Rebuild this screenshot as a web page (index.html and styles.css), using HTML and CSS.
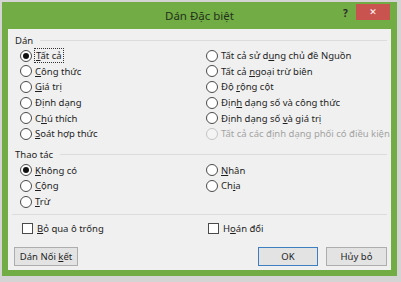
FILE: index.html
```html
<!DOCTYPE html>
<html>
<head>
<meta charset=utf-8>
<title>Dán Đặc biệt</title>
<link rel="stylesheet" href="styles.css">
</head>
<body>
<div class="dialog">
  <div class="titlebar">
    <span class="title">Dán Đặc biệt</span>
    <span class="help">?</span>
    <span class="close">&#x2715;</span>
  </div>
  <div class="panel">
    <div class="group-head"><span>Dán</span><i></i></div>
    <div class="options paste">
      <label class="opt"><span class="radio on"></span><span class="focus"><u>T</u>ất cả</span></label>
      <label class="opt"><span class="radio"></span><span>Tất cả sử d<u>u</u>ng chủ đề Nguồn</span></label>
      <label class="opt"><span class="radio"></span><span><u>C</u>ông thức</span></label>
      <label class="opt"><span class="radio"></span><span>Tất cả <u>n</u>goại trừ biên</span></label>
      <label class="opt"><span class="radio"></span><span><u>G</u>iá trị</span></label>
      <label class="opt"><span class="radio"></span><span>Độ <u>r</u>ộng cột</span></label>
      <label class="opt"><span class="radio"></span><span>Định dạng</span></label>
      <label class="opt"><span class="radio"></span><span>Địn<u>h</u> dạng số và công thức</span></label>
      <label class="opt"><span class="radio"></span><span>C<u>h</u>ú thích</span></label>
      <label class="opt"><span class="radio"></span><span>Định dạng số <u>v</u>à giá trị</span></label>
      <label class="opt"><span class="radio"></span><span><u>S</u>oát hợp thức</span></label>
      <label class="opt off"><span class="radio"></span><span>Tất cả các định dạng phối có điều kiện</span></label>
    </div>
    <div class="group-head op"><span>Thao tác</span><i></i></div>
    <div class="options">
      <label class="opt"><span class="radio on"></span><span><u>K</u>hông có</span></label>
      <label class="opt"><span class="radio"></span><span><u>N</u>hân</span></label>
      <label class="opt"><span class="radio"></span><span><u>C</u>ộng</span></label>
      <label class="opt"><span class="radio"></span><span>Ch<u>i</u>a</span></label>
      <label class="opt"><span class="radio"></span><span><u>T</u>rừ</span></label>
    </div>
    <div class="sep"></div>
    <div class="options checks">
      <label class="opt"><span class="check"></span><span><u>B</u>ỏ qua ô trống</span></label>
      <label class="opt"><span class="check"></span><span>H<u>o</u>án đổi</span></label>
    </div>
    <div class="buttons">
      <button class="btn link">Dán Nối <u>k</u>ết</button>
      <span class="spacer"></span>
      <button class="btn ok">OK</button>
      <button class="btn">Hủy bỏ</button>
    </div>
  </div>
</div>
</body>
</html>
```
FILE: styles.css
```css
* {
    box-sizing: border-box;
}
html, body {
    margin: 0;
    height: 100%;
}
body {
    background: #d4d4d4;
    padding: 2px 4px 0 2px;
    font-family: "Noto Sans", "DejaVu Sans", sans-serif;
    font-size: 9.5px;
    color: #1e1e1e;
}
.dialog {
    width: 395px;
    height: 274px;
    background: #72ac45;
    display: flex;
    flex-direction: column;
    padding: 0 6px 6px 6px;
}
.titlebar {
    height: 27px;
    position: relative;
}
.title {
    position: absolute;
    left: 0;
    right: 0;
    top: 6px;
    text-align: center;
    font-size: 11.5px;
    color: #22331a;
}
.help {
    position: absolute;
    left: 335px;
    top: 4px;
    font-weight: bold;
    font-size: 10px;
    color: #2a2a2a;
}
.close {
    position: absolute;
    left: 348px;
    top: 2px;
    width: 34px;
    height: 16px;
    background: #c9534f;
    color: #fff;
    font-size: 9px;
    line-height: 16px;
    text-align: center;
}
.panel {
    flex: 1;
    background: #f0f0f0;
    padding: 4px 4px 0 7px;
    display: flex;
    flex-direction: column;
}
.group-head {
    display: flex;
    align-items: center;
    height: 14px;
}
.group-head i {
    flex: 1;
    border-top: 1px solid #dcdcdc;
    margin-left: 7px;
}
.group-head.op {
    margin-top: 6px;
}
.options {
    display: grid;
    grid-template-columns: 186px 1fr;
    padding-left: 5px;
    margin-top: 1px;
}
.opt {
    display: flex;
    align-items: center;
    height: 15.6px;
    white-space: nowrap;
}
.opt u {
    text-decoration-thickness: 1px;
    text-underline-offset: 1px;
}
.radio {
    width: 12px;
    height: 12px;
    border: 1px solid #4a4a4a;
    border-radius: 50%;
    background: #fff;
    margin-right: 3px;
    flex: none;
    display: flex;
    align-items: center;
    justify-content: center;
}
.radio.on::after {
    content: "";
    width: 6px;
    height: 6px;
    border-radius: 50%;
    background: #111;
}
.off {
    color: #a3a3a3;
}
.off .radio {
    border-color: #c4c4c4;
    background: #f4f4f4;
}
.focus {
    outline: 1px dotted #333;
    outline-offset: 0;
    padding: 0 1px;
}
.sep {
    border-top: 1px solid #dcdcdc;
    margin: 5px 0 0 -3px;
}
.checks {
    margin-top: 5px;
}
.check {
    width: 11px;
    height: 11px;
    border: 1px solid #4a4a4a;
    background: #fff;
    margin: 0 4px 0 2px;
    flex: none;
}
.buttons {
    display: flex;
    margin: 11px 0 0 -1px;
    gap: 8px;
}
.spacer {
    flex: 1;
}
.btn {
    font-family: inherit;
    font-size: 9.5px;
    color: #1e1e1e;
    height: 19px;
    width: 61px;
    padding: 0;
    background: #e3e3e3;
    border: 1px solid #adadad;
}
.btn.link {
    width: 64px;
}
.btn.ok {
    width: 60px;
    border-color: #3d7fc0;
}
```
